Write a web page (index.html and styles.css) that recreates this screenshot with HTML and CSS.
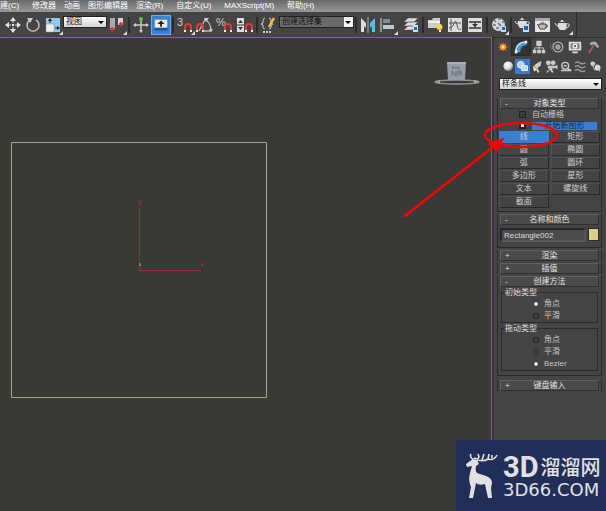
FILE: index.html
```html
<!DOCTYPE html>
<html lang="zh-CN">
<head>
<meta charset="utf-8">
<title>3ds Max</title>
<link rel="stylesheet" href="styles.css">
</head>
<body>
<svg class="defs" aria-hidden="true">
  <defs>
    <radialGradient id="ball" cx=".38" cy=".32" r=".7"><stop offset="0" stop-color="#fff"/><stop offset=".6" stop-color="#ddd"/><stop offset="1" stop-color="#888"/></radialGradient>
    <g id="magnet"><path d="M1 8V4a3 3 0 0 1 6 0v4" fill="none" stroke="#e03a34" stroke-width="2"/><path d="M0 8h2M6 8h2" stroke="#eee" stroke-width="2"/></g>
    <g id="teapot"><path d="M3 5h8q2 4-1 7H5Q2 9 3 5z"/><path d="M3 8Q1 8 0 5M11 6q4-1 3 2-1 2-3 2" fill="none" stroke="currentColor"/><path d="M4 4q3-2 6 0zM6 2h2v1H6z"/></g>
    <path id="corner" d="M20 16v4h-4z" fill="#ddd"/>
    <path id="down" d="M0 0h6L3 3z"/>
  </defs>
</svg>
<nav class="menubar">
  <a href="#" class="key">建(C)</a><a href="#">修改器</a><a href="#">动画</a><a href="#">图形编辑器</a><a href="#" class="key">渲染(R)</a><a href="#" class="key">自定义(U)</a><a href="#" class="key">MAXScript(M)</a><a href="#">帮助(H)</a>
</nav>
<div class="toolbar">
  <button aria-label="移动"><svg viewBox="0 0 20 20"><path d="M10 4v12M4 10h12" stroke="#ddd" stroke-dasharray="4 4"/><path d="M10 2l3 4H7zM10 18l3-4H7zM2 10l4-3v6zM18 10l-4-3v6z" fill="#e4e4e4"/><path d="M9 9h2v2H9z" fill="#eee"/></svg></button>
  <button aria-label="旋转"><svg viewBox="0 0 20 20"><path d="M7 5a6 6 0 1 0 6 0" fill="none" stroke="#bbb" stroke-width="1.6"/><path d="M4 3l6 0-3 5z" fill="#ccc"/></svg></button>
  <button aria-label="缩放"><svg viewBox="0 0 20 20"><path d="M3 3h14v14H3z" fill="#8ccaf0"/><path d="M3 9h8v8H3z" fill="#f0f0f0" stroke="#888" stroke-width=".5"/><path d="M7 8V5M12 13h3" stroke="#123"/><path d="M7 3l2 3H5zM17 13l-3-2v4z" fill="#123"/><use href="#corner"/></svg></button>
  <span class="combo view"><select aria-label="参考坐标系"><option>视图</option></select><svg class="arrow" viewBox="0 0 6 3"><use href="#down"/></svg></span>
  <button aria-label="轴心"><svg viewBox="0 0 20 20"><path d="M3 3h5v12H3z" fill="#aaa"/><path d="M11 3h5v7h-5z" fill="#d4d4d4"/><path d="M5 12v5M14 7v5M3 14h5M12 9h5" stroke="#d72b2b" stroke-width="1.5"/><use href="#corner"/></svg></button>
  <i class="sep"></i>
  <button aria-label="操纵"><svg viewBox="0 0 20 20"><path d="M10 5v12M3 10h14" stroke="#ccc" stroke-width="1.4"/><path d="M8 15h4l-2 3zM2 10l3-2v4zM18 10l-3-2v4z" fill="#ccc"/><circle cx="10" cy="4" r="2" fill="#65c532"/></svg></button>
  <button aria-label="键盘快捷键" class="on"><svg viewBox="0 0 20 20"><path d="M3 4h14v12H3z" fill="#20538d"/><path d="M3 4h14v9H3z" fill="#eee"/><path d="M10 5l4 4h-3v3H9V9H6z" fill="#222"/></svg></button>
  <i class="sep"></i>
  <button aria-label="捕捉"><svg viewBox="0 0 20 20"><text x="2" y="11" class="glyph">3</text><use href="#magnet" x="9" y="8"/><use href="#corner"/></svg></button>
  <button aria-label="角度捕捉"><svg viewBox="0 0 20 20"><path d="M11 3L4 16M9 4q7 3 7 12H8" fill="none" stroke="#bbb" stroke-width="1.3"/><path d="M9 3h5l-3 4zM18 14l-2 3-2-3z" fill="#ccc"/><use href="#magnet" x="1" y="8"/></svg></button>
  <button aria-label="百分比捕捉"><svg viewBox="0 0 20 20"><text x="1" y="11" class="glyph">%</text><use href="#magnet" x="9" y="8"/></svg></button>
  <button aria-label="微调器捕捉"><svg viewBox="0 0 20 20"><path d="M2 3h7v14H2z" fill="#ddd"/><path d="M3 8l2.500-3L8 8zM3 12l2.500 3L8 12zM2 9.500h7v1H2z" fill="#333"/><use href="#magnet" x="10" y="8"/></svg></button>
  <i class="sep"></i>
  <button aria-label="命名选择集"><svg viewBox="0 0 20 20"><path d="M6 3Q4 3 4 6v2L2 9l2 1v2q0 2 2 2M10 3q2 0 2 3v2l2 1-2 1v2q0 2-2 2" fill="none" stroke="#ccc"/><path d="M15 3l-5 9" stroke="#f4bd45" stroke-width="2.500"/><path d="M4 17h9" stroke="#ccc" stroke-width="2" stroke-dasharray="2 1"/></svg></button>
  <span class="combo named"><select aria-label="命名选择集列表"><option>创建选择集</option></select><svg class="arrow" viewBox="0 0 6 3"><use href="#down"/></svg></span>
  <i class="sep"></i>
  <button aria-label="镜像"><svg viewBox="0 0 20 20"><path d="M3 3l5 5v5l-2-2v6H3z" fill="#ddd"/><path d="M17 3l-5 5v5l2-2v6h3z" fill="#60b8ed"/><path d="M10 2v16" stroke="#ccc" stroke-width=".8"/></svg></button>
  <button aria-label="对齐"><svg viewBox="0 0 20 20"><path d="M3 3v14" stroke="#ddd"/><path d="M5 4h7v4H5z" fill="#81899a"/><path d="M5 10h11v4H5z" fill="#c5c7cf"/><use href="#corner"/></svg></button>
  <button aria-label="层" class="gap"><svg viewBox="0 0 20 20"><path d="M7 3h10l-4 4H3zM7 7h10l-4 4H3zM7 11h8l-4 4H3z" fill="#ddd" stroke="#555" stroke-width=".5"/><path d="M12 10h5v7h-5z" fill="#c9e2f7"/><path d="M13 12h3v3h-3z" fill="#2764a5"/></svg></button>
  <i class="sep"></i>
  <button aria-label="功能区"><svg viewBox="0 0 20 20"><path d="M3 5h4l1-2h7v10H3z" fill="#ccc"/><path d="M3 6h12v2H3z" fill="#eee"/><circle cx="14.500" cy="12" r="3" fill="#ffd04a"/><path d="M14 15h2v2h-2z" fill="#eee"/></svg></button>
  <button aria-label="曲线编辑器"><svg viewBox="0 0 20 20"><path d="M3 3h14v14H3z" fill="#ddd"/><path d="M6 4v12M4 8h12M4 13q4 0 5-5 2-4 3 2t4 4" fill="none" stroke="#555"/></svg></button>
  <button aria-label="图解视图"><svg viewBox="0 0 20 20"><path d="M3 3h14v14H3z" fill="#ddd"/><path d="M4 7h12M4 13h12M10 7v5" stroke="#333" stroke-width="1.3"/><path d="M7 9h6l-3 3z" fill="#333"/></svg></button>
  <i class="sep"></i>
  <button aria-label="材质编辑器"><svg viewBox="0 0 20 20"><circle cx="9.500" cy="9.500" r="6.500" fill="#d2d6d9"/><path d="M5 5l2 2M9 4h3M4 10h3M9 8l3 3M7 13h3M13 7h2" stroke="#6a737c" stroke-width="1.500"/><path d="M12 11h5v6h-5z" fill="#c3dcf5"/><path d="M13 12h3v3h-3z" fill="#2764a5"/><use href="#corner"/></svg></button>
  <i class="sep"></i>
  <button aria-label="渲染设置"><svg viewBox="0 0 20 20"><use href="#teapot" x="2" y="1" fill="currentColor"/><path d="M10 9h6v8h-6z" fill="#c3dcf5"/><path d="M11 11h4v4h-4z" fill="#2764a5"/></svg></button>
  <button aria-label="渲染帧窗口"><svg viewBox="0 0 20 20"><path d="M2 3h15v14H2z" fill="#e4e4e4"/><path d="M2 3h15v3H2z" fill="#aaa"/><path d="M6 9h7q1 3-1 5H7Q5 12 6 9zM6 11L4 9M13 10q3 0 0 3M8 8h3" fill="#bbb" stroke="#444"/></svg></button>
  <button aria-label="渲染"><svg viewBox="0 0 20 20"><use href="#teapot" x="2" y="3" fill="currentColor"/><use href="#corner"/></svg></button>
  <i class="sep last"></i>
</div>
<main class="work">
  <section class="viewport" aria-label="视口">
    <svg class="scene" width="280" height="370" viewBox="0 0 280 370">
      <path d="M11.500 104.500h255v255h-255z" fill="none" stroke="#a9a981"/>
      <path d="M139.500 170v62.500H201" fill="none" stroke="#a12b2b"/>
      <text x="138" y="166" class="axis">y</text><text x="200" y="229" class="axis">x</text>
      <path d="M139 225h2v3h-2z" fill="#777"/>
    </svg>
    <svg class="cube" width="48" height="28" viewBox="0 0 48 28">
      <ellipse cx="24" cy="22" rx="22" ry="2" fill="none" stroke="#8e9291" stroke-width="1.500"/>
      <path d="M2 22l5-2v3zM46 22l-5-2v3z" fill="#aaa"/>
      <path d="M14 2h19l-1 18H15z" fill="#989ca4"/><path d="M14 2h19v2H14z" fill="#aaaeb4"/>
      <path d="M19 8h8M20 6v3M25 6v3M19 16v-5l4 5v-5M25 16v-5h3v5M25 13h3" fill="none" stroke="#686c78"/>
    </svg>
  </section>
  <aside class="panel">
    <div class="tabs">
      <button aria-label="创建"><svg viewBox="0 0 18 18"><path d="M9 3v12M3 9h12M5 5l8 8M13 5l-8 8" stroke="#a95017" stroke-width="1.500"/><circle cx="9" cy="9" r="3.500" fill="#f39a35"/><circle cx="9" cy="9" r="1.500" fill="#ffe9a0"/></svg></button>
      <button aria-label="修改" class="cur"><svg viewBox="0 0 18 18"><path d="M3 15Q3 4 15 3v4Q8 7 8 15z" fill="#3c9edc"/><path d="M3 15Q3 4 15 3" fill="none" stroke="#ddd" stroke-width="1.500"/><path d="M2 13h3v3H2zM13 2h3v3h-3z" fill="#eee"/></svg></button>
      <button aria-label="层次"><svg viewBox="0 0 18 18"><path d="M6 2h6v6H6zM2 12h4v4H2zM7 12h4v4H7zM12 12h4v4h-4z" fill="#ccc"/><path d="M9 8v4M4 12v-2h10v2" fill="none" stroke="#ccc"/></svg></button>
      <button aria-label="运动"><svg viewBox="0 0 18 18"><circle cx="10" cy="9" r="5.500" fill="none" stroke="#aaa" stroke-width="1.500"/><circle cx="10" cy="9" r="2.500" fill="#999" stroke="#bbb"/><path d="M2 6q-1 3 1 6M5 4q-3 5 1 10" fill="none" stroke="#777"/></svg></button>
      <button aria-label="显示"><svg viewBox="0 0 18 18"><path d="M2 3h14v10H2zM6 14h6v2H6z" fill="#ddd"/><path d="M4 5h10v6H4z" fill="#777"/><circle cx="9" cy="8" r="3" fill="#eee"/><circle cx="9" cy="8" r="1.300" fill="#555"/></svg></button>
      <button aria-label="实用程序"><svg viewBox="0 0 18 18"><path d="M10 7l-6 9" stroke="#a45c59" stroke-width="2"/><path d="M5 5q4-4 8-1l3 5-2 1-4-4-3 1z" fill="#aaa"/></svg></button>
    </div>
    <div class="kinds">
      <button aria-label="几何体"><svg viewBox="0 0 15 15"><circle cx="7.500" cy="7.500" r="5" fill="url(#ball)"/></svg></button>
      <button aria-label="图形" class="on"><svg viewBox="0 0 15 15"><circle cx="6" cy="6" r="3.500" fill="#b8d5f4" stroke="#eee"/><path d="M7 7h6v5H7z" fill="#c8d8e8" stroke="#eee"/></svg></button>
      <button aria-label="灯光"><svg viewBox="0 0 15 15"><path d="M8 4l4-2-1 5-4 3-3-3z" fill="#ccc"/><path d="M3 7l5 4-4 2z" fill="#ffe98a"/><path d="M7 10l2 4" stroke="#ccc" stroke-width="2"/></svg></button>
      <button aria-label="摄影机"><svg viewBox="0 0 15 15"><circle cx="4.500" cy="4" r="2.500" fill="#ccc"/><circle cx="9.500" cy="4" r="2.500" fill="#ccc"/><path d="M4 7h7v3H4zM10 8l4-2v5zM6 10h2l2 4H8l-2-3-2 3H2z" fill="#ccc"/></svg></button>
      <button aria-label="辅助对象"><svg viewBox="0 0 15 15"><circle cx="6.500" cy="7" r="3.500" fill="none" stroke="#ccc" stroke-width="1.500"/><path d="M5 7h3M9 10l4 2M2 12h11" stroke="#ccc" stroke-width="1.500"/></svg></button>
      <button aria-label="空间扭曲"><svg viewBox="0 0 15 15"><path d="M2 4q3-2 5 0t6 0M2 8q3-2 5 0t6 0M2 12q3-2 5 0t6 0" fill="none" stroke="#999" stroke-width="1.500"/></svg></button>
      <button aria-label="系统"><svg viewBox="0 0 15 15"><circle cx="5" cy="5" r="2.500" fill="#ccc"/><circle cx="10" cy="9" r="3" fill="#ddd"/><path d="M5 7l2 5M9 5l3 8" stroke="#bbb"/></svg></button>
    </div>
    <span class="combo category"><select aria-label="图形类别"><option>样条线</option></select><svg class="arrow" viewBox="0 0 6 3"><use href="#down"/></svg></span>

    <div class="rollouts">
      <section class="rollout">
        <button class="head"><span>-</span>对象类型</button>
        <label class="check grid-opt"><input type="checkbox">自动栅格</label>
        <div class="check"><input type="checkbox" id="newshape" checked><label for="newshape" class="lit">开始新图形</label></div>
        <div class="types">
          <button class="on">线</button><button>矩形</button>
          <button>圆</button><button>椭圆</button>
          <button>弧</button><button>圆环</button>
          <button>多边形</button><button>星形</button>
          <button>文本</button><button>螺旋线</button>
          <button>截面</button>
        </div>
      </section>
      <section class="rollout">
        <button class="head"><span>-</span>名称和颜色</button>
        <div class="name"><input type="text" aria-label="名称" value="Rectangle002"><button class="swatch" aria-label="颜色"></button></div>
      </section>
      <section class="rollout closed"><button class="head"><span>+</span>渲染</button></section>
      <section class="rollout closed"><button class="head"><span>+</span>插值</button></section>
      <section class="rollout method">
        <button class="head"><span>-</span>创建方法</button>
        <fieldset><legend>初始类型</legend>
          <label><input type="radio" name="initial" checked>角点</label>
          <label><input type="radio" name="initial">平滑</label>
        </fieldset>
        <fieldset><legend>拖动类型</legend>
          <label><input type="radio" name="drag">角点</label>
          <label><input type="radio" name="drag">平滑</label>
          <label><input type="radio" name="drag" checked>Bezier</label>
        </fieldset>
      </section>
      <section class="rollout closed"><button class="head"><span>+</span>键盘输入</button></section>
    </div>
    <svg class="callout" width="160" height="110" viewBox="0 0 160 110" aria-hidden="true">
      <ellipse cx="121" cy="25" rx="36" ry="12" fill="none" stroke="#f20505" stroke-width="2.500"/>
      <path d="M5 106L98 33" stroke="#f20505" stroke-width="2.500" stroke-linecap="round"/>
      <path d="M104 28L88 34l6 2 2 7z" fill="#f20505" stroke="#f20505"/>
    </svg>
  </aside>
</main>
<div class="brand">
  <svg width="34" height="48" viewBox="0 0 34 48" aria-hidden="true">
    <path fill="#e1e1e3" d="M1 12l7-5 4 1 2 4-3 2q-1 5 1 7l9 3q6 2 6 7l-1 5 1 10h-4l-2-9-1-5q-6 2-9-1l-1 5-2 10H4l2-11q-3-7-1-14l2-7-5 1z"/>
    <path fill="none" stroke="#e1e1e3" stroke-width="1.600" d="M9 8Q4 5 6 2M9 6q4 2 5-1l-1-3M12 8q7 2 11-1 6 2 9-4M17 8l2-6M23 7l1-5M27 6V3"/>
  </svg>
  <div class="words"><div class="big"><b>3D</b><span>溜溜网</span></div><div class="site">3D66.COM</div></div>
</div>
</body>
</html>
```
FILE: styles.css
```css
* { box-sizing: border-box; }
body {
  margin: 0;
  min-height: 100vh;
  display: flex;
  flex-direction: column;
  position: relative;
  overflow: hidden;
  background: #444;
  color: #dcdcdc;
  font: 8px/12px "Liberation Sans", "Noto Sans CJK SC", sans-serif;
}
button, input, select { font: inherit; color: inherit; margin: 0; }
button { padding: 0; border: 0; background: none; }
svg { display: block; }
.defs { position: absolute; width: 0; height: 0; }

.menubar {
  display: flex;
  gap: 8px;
  height: 12px;
  background: linear-gradient(#686868, #989898);
  white-space: nowrap;
}
.menubar a { color: #fff; text-decoration: none; line-height: 11px; }
.menubar .key { margin-right: 5px; }

.toolbar {
  display: flex;
  align-items: center;
  height: 25px;
  padding-left: 3px;
  background: #444;
  color: #ddd;
}
.toolbar button { flex: none; width: 20px; height: 20px; }
.toolbar .on { background: #3a80d4; border: 1px solid #74aaea; }
.toolbar .gap { margin-left: 3px; }
.toolbar .on svg { width: 18px; height: 18px; }
.sep { flex: none; width: 2px; height: 16px; margin: 0 1px; background: #2c2c2c; }
.sep.last { height: 25px; margin-left: 3px; width: 1px; }
.glyph { font-size: 11px; fill: #ccc; }

.combo { position: relative; display: block; flex: none; }
.combo select {
  display: block;
  width: 100%;
  height: 12px;
  padding: 0 2px;
  appearance: none;
  border: 1px solid #222;
  border-radius: 0;
  background: linear-gradient(#fff, #d4d4d4);
  color: #111;
  line-height: 10px;
}
.combo .arrow { position: absolute; right: 3px; top: 5px; width: 6px; height: 3px; }
.view, .named { margin-top: -5px; }
.view { width: 44px; }
.named { width: 75px; }
.named select { background: linear-gradient(90deg, #6a6a6a 64px, #f4f4f4 64px); }

.work { flex: 1; display: grid; grid-template-columns: 1fr 114px; }
.viewport {
  position: relative;
  background: #393938;
  border-top: 1px solid #8a7424;
  border-right: 1px solid #8a7424;
}
.cube { position: absolute; right: 10px; top: 22px; }
.axis { font-size: 7px; fill: #b02c2c; }

.panel {
  position: relative;
  padding-right: 4px;
  border-left: 2px solid #333;
  border-top: 1px solid #2e2e2e;
}
.tabs, .kinds { display: flex; }
.tabs button { width: 18px; height: 17px; }
.tabs .cur { background: #333; outline: 1px solid #292929; }
.tabs svg { width: 16px; height: 16px; margin: auto; }
.kinds { padding: 4px 0 4px 7px; }
.kinds button { width: 15px; height: 15px; }
.kinds .on { background: #3a7bd0; }
.category { margin: 0 0 8px 5px; }

.rollouts { margin-left: 3px; display: grid; grid-template-columns: minmax(0, 1fr); gap: 2px; }
.rollout { border: 1px solid #2a2a2a; border-top: 0; padding: 0 2px 3px; }
.head {
  position: relative;
  display: block;
  width: 100%;
  height: 11px;
  border: 1px solid;
  border-color: #616161 #303030 #303030 #616161;
  background: #4a4a4a;
  line-height: 9px;
  color: #e4e4e4;
}
.head span { position: absolute; left: 4px; }
.rollout.closed { padding: 0 2px; border-bottom: 0; }
.check { display: flex; align-items: center; height: 11px; padding-left: 19px; gap: 6px; }
.grid-opt { color: #c4c4c4; }
.check input {
  appearance: none;
  width: 7px;
  height: 7px;
  background: #3a3a3a;
  border: 1px solid #222;
}
.check input:checked { background: #eee; border-width: 2px; }
.check .lit { flex: 1; margin-right: 2px; height: 8px; line-height: 8px; text-align: center; background: #3a7fd4; color: #14273f; }
.types { display: grid; grid-template-columns: 1fr 1fr; gap: 1px 2px; margin: 0 -1px; }
.types button {
  height: 12px;
  line-height: 10px;
  border: 1px solid;
  border-color: #515151 #2a2a2a #2a2a2a #515151;
  color: #cfcfcf;
}
.types .on { background: #3a7fd4; border-color: #3a7fd4; }
.name { display: flex; gap: 2px; padding: 3px 0 2px; }
.name input {
  flex: 1;
  min-width: 0;
  height: 14px;
  padding: 0 2px;
  border: 2px solid;
  border-color: #262626 #555 #555 #262626;
  background: #4c4c4c;
}
.swatch { width: 11px; height: 13px; background: #dccf87; border: 1px solid #2c2c2c; }
.method { padding-bottom: 4px; margin-bottom: 2px; }
fieldset { margin: 0 1px; padding: 0 0 0 31px; border: 1px solid #2c2c2c; }
legend { margin-left: -29px; padding: 0 1px; line-height: 11px; }
fieldset label { display: flex; align-items: center; gap: 5px; height: 12px; color: #c4c4c4; }
fieldset input {
  appearance: none;
  width: 6px;
  height: 6px;
  border-radius: 50%;
  border: 1px solid #222;
  background: #444;
}
fieldset input:checked { background: #f0f0f0; }
.callout { position: absolute; left: -94px; top: 72px; pointer-events: none; }

.brand {
  position: absolute;
  right: 0;
  bottom: 0;
  display: flex;
  gap: 4px;
  width: 150px;
  height: 71px;
  padding: 12px 0 0 9px;
  background: #212e58;
  color: #e1e1e3;
  white-space: nowrap;
}
.big { display: flex; gap: 2px; align-items: center; height: 30px; }
.big b { font: bold 29px/30px "Liberation Sans Narrow", Roboto, sans-serif; }
.big span { font: 500 20px/28px "Noto Sans CJK SC", sans-serif; }
.site { font: 18px/16px "DejaVu Sans", sans-serif; }
```
